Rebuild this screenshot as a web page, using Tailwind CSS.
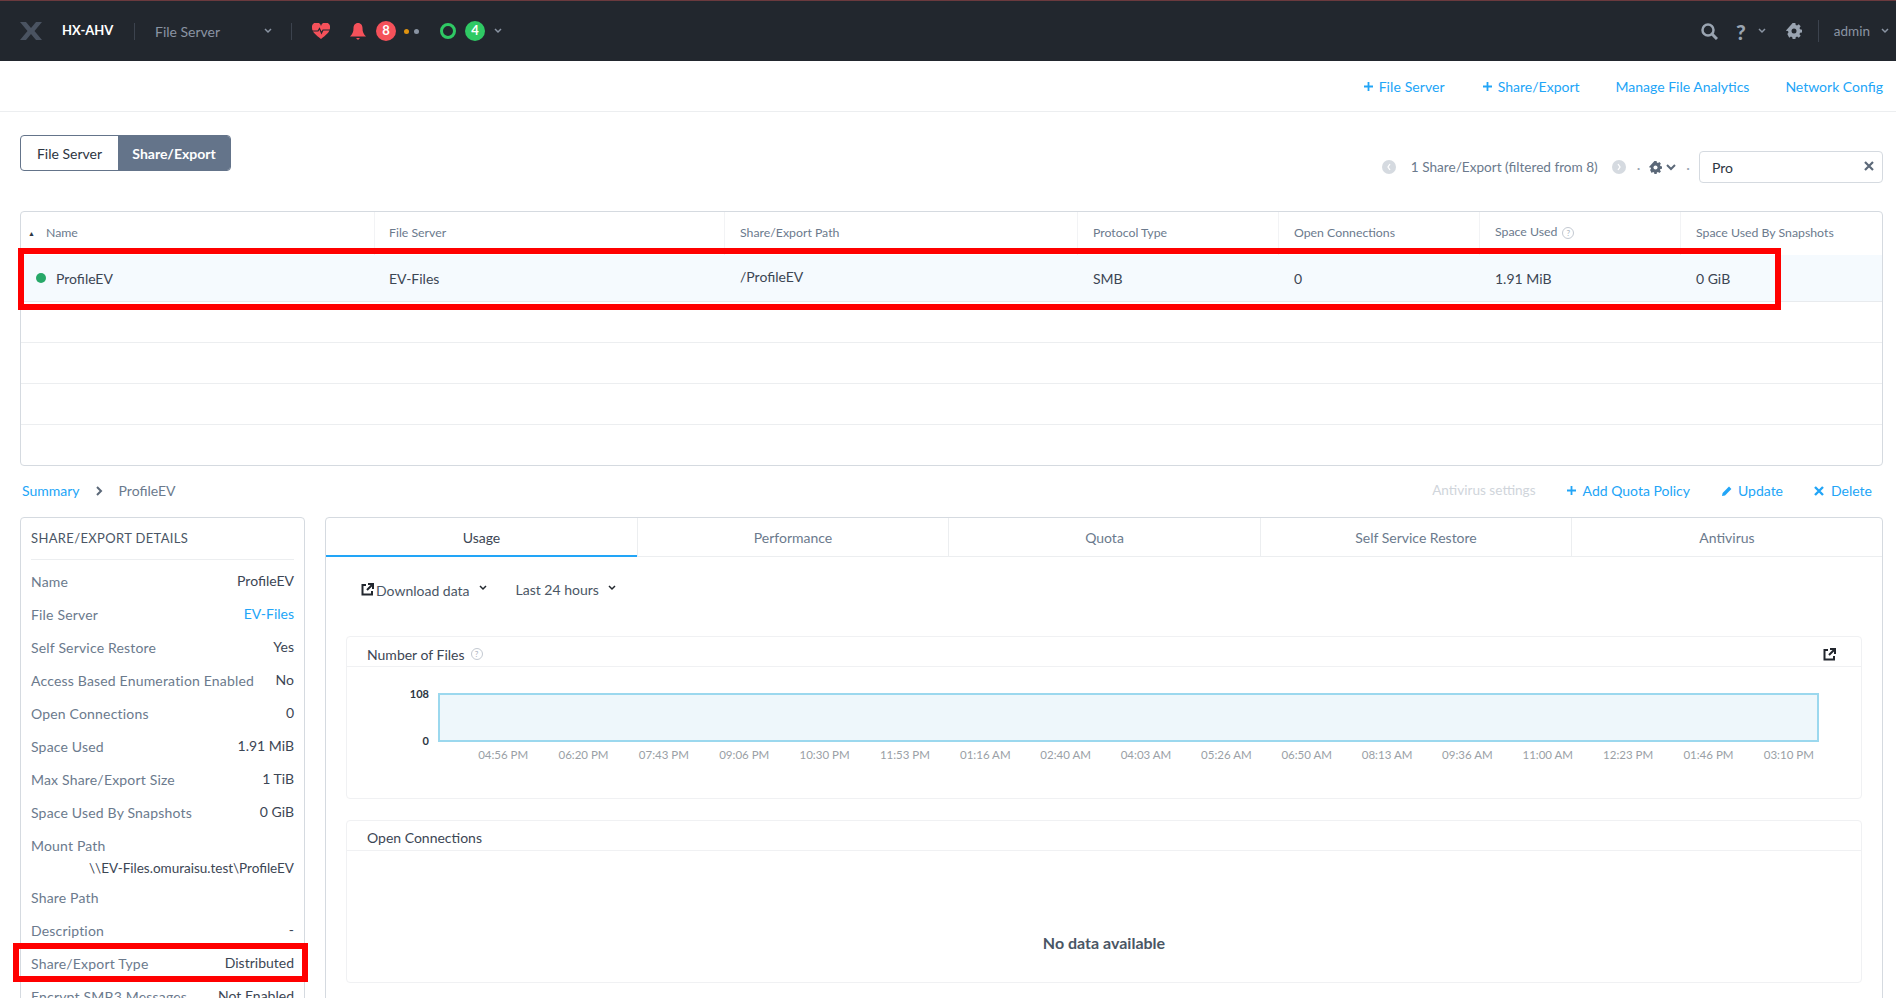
<!DOCTYPE html>
<html lang="en">

<head>
    <meta charset="UTF-8">
    <title>HX-AHV File Server</title>
    <script src="https://cdn.jsdelivr.net/npm/@tailwindcss/browser@4"></script>
</head>

<body class="relative h-[998px] overflow-hidden bg-white font-['Lato','Liberation_Sans',sans-serif] text-[14px] text-[#4a5665]">

    <!-- top nav -->
    <header class="h-[61px] bg-[#22272e] border-t border-[#6b3a3e] flex items-center text-[#8a94a3]">
        <svg class="ml-[20px] w-[22px] h-[18px]" viewBox="0 0 22 18"><path d="M0 0h6l5 6 5-6h6l-7.500 9L22 18h-6l-5-6-5 6H0l7.500-9z" fill="#4a5361"/></svg>
        <span class="ml-[20px] w-[52px] text-[13px] font-bold text-white">HX-AHV</span>
        <div class="ml-[20px] w-px h-[17px] bg-[#3c434e]"></div>
        <span class="ml-[20px] w-[109px]">File Server</span>
        <svg class="w-[8px] h-[6px]" viewBox="0 0 8 6"><path d="M1 1l3 3 3-3" fill="none" stroke="#8a94a3" stroke-width="1.500"/></svg>
        <div class="ml-[19px] w-px h-[17px] bg-[#3c434e]"></div>
        <svg class="ml-[20px] w-[18px] h-[16px]" viewBox="0 0 18 16"><path d="M9 16C4 12 0 9 0 5a4.500 4.500 0 0 1 9-2 4.500 4.500 0 0 1 9 2c0 4-4 7-9 11z" fill="#f5515a"/><path d="M0 8h6l1.500-2.500L9.500 10l1.500-3h7" fill="none" stroke="#22272e" stroke-width="1.200"/></svg>
        <svg class="ml-[20px] w-[16px] h-[17px]" viewBox="0 0 16 17"><path d="M8 0c3 0 4.500 2.500 4.500 5 0 4 1 6 3.500 8.500H0C2.500 11 3.500 9 3.500 5 3.500 2.500 5 0 8 0zM6 15h4l-2 2z" fill="#f5515a"/></svg>
        <span class="ml-[10px] w-[20px] h-[20px] rounded-full bg-[#f5515a] text-[13px] text-white font-bold flex items-center justify-center">8</span>
        <span class="ml-[8px] w-[5px] h-[5px] rounded-full bg-[#e0930f]"></span>
        <span class="ml-[5px] w-[5px] h-[5px] rounded-full bg-[#8a94a3]"></span>
        <span class="ml-[21px] w-[16px] h-[16px] rounded-full border-[3.500px] border-[#2fc964]"></span>
        <span class="ml-[9px] w-[20px] h-[20px] rounded-full bg-[#2fc964] text-[13px] text-white font-bold flex items-center justify-center">4</span>
        <svg class="ml-[9px] w-[8px] h-[6px]" viewBox="0 0 8 6"><path d="M1 1l3 3 3-3" fill="none" stroke="#8a94a3" stroke-width="1.500"/></svg>

        <div class="ml-auto flex items-center">
            <svg class="w-[17px] h-[17px]" viewBox="0 0 17 17"><circle cx="7" cy="7" r="5.500" fill="none" stroke="#9aa4b1" stroke-width="2.500"/><path d="M11 11l5 5" stroke="#9aa4b1" stroke-width="3"/></svg>
            <span class="ml-[18px] text-[21px] font-black leading-none text-[#9aa4b1]">?</span>
            <svg class="ml-[12px] w-[8px] h-[6px]" viewBox="0 0 8 6"><path d="M1 1l3 3 3-3" fill="none" stroke="#8a94a3" stroke-width="1.500"/></svg>
            <svg class="ml-[20px] w-[16px] h-[16px]" viewBox="0 0 16 16"><path d="M6.500 0h3l.4 2.200 1.500.6L13.300 1.500l2.100 2.100-1.300 1.900.6 1.500 2.300.5v3l-2.300.4-.6 1.500 1.300 1.900-2.100 2.100-1.900-1.300-1.500.6-.4 2.300h-3l-.4-2.300-1.500-.6-1.900 1.300L.6 12.300l1.300-1.900-.6-1.500L-1 8.500z" fill="#9aa4b1" transform="translate(.8 0) scale(.9)"/><circle cx="8" cy="8" r="2.500" fill="#22272e"/></svg>
            <div class="ml-[16px] w-px h-[22px] bg-[#3c434e]"></div>
            <span class="ml-[15px] text-[13.500px]">admin</span>
            <svg class="ml-[11px] mr-[7px] w-[8px] h-[6px]" viewBox="0 0 8 6"><path d="M1 1l3 3 3-3" fill="none" stroke="#8a94a3" stroke-width="1.500"/></svg>
        </div>
    </header>

    <!-- action bar -->
    <div class="h-[51px] border-b border-[#eceef0] flex items-center justify-end pr-[13px] text-[#22a5f7]">
        <svg class="mr-[6px] w-[9px] h-[9px]" viewBox="0 0 9 9"><path d="M4.500 0v9M0 4.500h9" stroke="#22a5f7" stroke-width="1.800"/></svg><span class="tracking-[0.1px]">File Server</span>
        <svg class="ml-[38px] mr-[6px] w-[9px] h-[9px]" viewBox="0 0 9 9"><path d="M4.500 0v9M0 4.500h9" stroke="#22a5f7" stroke-width="1.800"/></svg><span>Share/Export</span>
        <span class="ml-[36px]">Manage File Analytics</span>
        <span class="ml-[36px]">Network Config</span>
    </div>

    <!-- toggle + filter -->
    <div class="h-[99px] flex pr-[13px] pl-[20px]">
        <div class="mt-[23px] h-[36px] flex rounded border border-[#64748a] overflow-hidden">
            <span class="w-[97px] pt-[1px] flex items-center justify-center text-[#2d3642]">File Server</span>
            <span class="w-[112px] pt-[1px] flex items-center justify-center bg-[#64748a] text-white font-bold">Share/Export</span>
        </div>
        <div class="ml-auto mt-[39px] h-[32px] flex items-center text-[#6b7a8d]">
            <span class="w-[14px] h-[14px] rounded-full bg-[#d5dae0] flex items-center justify-center"><svg class="w-[6px] h-[8px]" viewBox="0 0 6 8"><path d="M4 1L2 4l2 3" fill="none" stroke="#fff" stroke-width="1.300"/></svg></span>
            <span class="ml-[15px] text-[13.600px]">1 Share/Export (filtered from 8)</span>
            <span class="ml-[14px] w-[14px] h-[14px] rounded-full bg-[#d5dae0] flex items-center justify-center"><svg class="w-[6px] h-[8px]" viewBox="0 0 6 8"><path d="M2 1l2 3-2 3" fill="none" stroke="#fff" stroke-width="1.300"/></svg></span>
            <span class="ml-[11px] text-[#9aa4b1]">·</span>
            <svg class="ml-[9px] w-[13px] h-[13px]" viewBox="0 0 16 16"><path d="M6.500 0h3l.4 2.200 1.500.6 1.900-1.300 2.100 2.100-1.300 1.900.6 1.500 2.300.5v3l-2.300.4-.6 1.500 1.300 1.900-2.100 2.100-1.900-1.300-1.500.6-.4 2.300h-3l-.4-2.300-1.500-.6-1.900 1.300L.6 12.300l1.300-1.900-.6-1.500L-1 8.500z" fill="#5b6878" transform="translate(.8 0) scale(.9)"/><circle cx="8" cy="8" r="2.500" fill="#fff"/></svg>
            <svg class="ml-[4px] w-[10px] h-[7px]" viewBox="0 0 10 7"><path d="M1 1l4 4 4-4" fill="none" stroke="#5b6878" stroke-width="2"/></svg>
            <span class="ml-[10px] text-[#9aa4b1]">·</span>
            <div class="ml-[9px] w-[184px] h-[32px] rounded border border-[#d5dae0] flex items-center justify-between pl-[12px] pr-[8px] text-[#2d3642]">
                <span class="pt-[1px]">Pro</span>
                <svg class="w-[10px] h-[10px] mb-[3px]" viewBox="0 0 10 10"><path d="M1 1l8 8M9 1l-8 8" stroke="#5b6878" stroke-width="2.200"/></svg>
            </div>
        </div>
    </div>

    <!-- table -->
    <div class="mr-[13px] ml-[20px] h-[255px] rounded border border-[#d5dae0] overflow-hidden">
        <div class="h-[43px] grid grid-cols-[354px_350px_353px_201px_201px_201px_1fr] text-[12.300px] text-[#6b7a8d]">
            <div class="border-r border-[#f2f3f5] pl-[7px] flex items-center"><span class="text-[7px] mr-[11px] text-[#2d3642]">▲</span>Name</div>
            <div class="border-r border-[#f2f3f5] pl-[14px] flex items-center">File Server</div>
            <div class="border-r border-[#f2f3f5] pl-[15px] flex items-center">Share/Export Path</div>
            <div class="border-r border-[#f2f3f5] pl-[15px] flex items-center">Protocol Type</div>
            <div class="border-r border-[#f2f3f5] pl-[15px] flex items-center">Open Connections</div>
            <div class="border-r border-[#f2f3f5] pl-[15px] pb-[2px] flex items-center">Space Used
                <span class="ml-[5px] w-[12px] h-[12px] rounded-full border border-[#c3c9d1] text-[8px] text-[#a9b1bb] flex items-center justify-center">?</span>
            </div>
            <div class="pl-[15px] flex items-center">Space Used By Snapshots</div>
        </div>
        <div class="h-[47px] bg-[#f5fafe] border-b border-[#e8ebee] grid grid-cols-[354px_350px_353px_201px_201px_201px_1fr] items-center text-[#3c4654]">
            <div class="pl-[16px] flex items-center"><span class="w-[10px] h-[10px] rounded-full bg-[#27a868] mr-[6px] -ml-[1px]"></span><span class="ml-[4px]">ProfileEV</span></div>
            <div class="pl-[14px]">EV-Files</div>
            <div class="pl-[15px] -mt-[4px]">/ProfileEV</div>
            <div class="pl-[15px]">SMB</div>
            <div class="pl-[15px]">0</div>
            <div class="pl-[15px]">1.91 MiB</div>
            <div class="pl-[15px]">0 GiB</div>
        </div>
        <div class="h-[41px] border-b border-[#eceef0]"></div>
        <div class="h-[41px] border-b border-[#eceef0]"></div>
        <div class="h-[41px] border-b border-[#eceef0]"></div>
    </div>

    <!-- breadcrumb + actions -->
    <div class="h-[51px] flex items-center pl-[22px] pr-[24px] pb-[2px]">
        <span class="text-[#22a5f7]">Summary</span>
        <svg class="ml-[15px] w-[8px] h-[10px]" viewBox="0 0 8 10"><path d="M2 1l4 4-4 4" fill="none" stroke="#5b6878" stroke-width="2"/></svg>
        <span class="ml-[16px] text-[#6b7a8d]">ProfileEV</span>
        <div class="ml-auto flex items-center text-[#22a5f7]">
            <span class="text-[13.600px] text-[#d0d5db]">Antivirus settings</span>
            <svg class="ml-[31px] mr-[7px] w-[9px] h-[9px]" viewBox="0 0 9 9"><path d="M4.500 0v9M0 4.500h9" stroke="#22a5f7" stroke-width="1.800"/></svg><span>Add Quota Policy</span>
            <svg class="ml-[32px] mr-[6px] w-[10px] h-[10px]" viewBox="0 0 10 10"><path d="M0 10l.6-3L7 .6 9.400 3 3 9.400z" fill="#22a5f7"/></svg><span>Update</span>
            <svg class="ml-[31px] mr-[7px] w-[10px] h-[10px]" viewBox="0 0 10 10"><path d="M1 1l8 8M9 1l-8 8" stroke="#22a5f7" stroke-width="2.400"/></svg><span>Delete</span>
        </div>
    </div>

    <!-- detail area -->
    <div class="flex pl-[20px] pr-[13px] gap-[20px]">
        <aside class="w-[285px] h-[500px] shrink-0 rounded-t border border-[#d5dae0] px-[10px]">
            <div class="h-[42px] pt-[1px] border-b border-[#eceef0] flex items-center text-[13px] text-[#4a5665] tracking-[0.35px]">SHARE/EXPORT DETAILS</div>
            <dl class="pt-[5px] text-[#6b7a8d] tracking-[0.18px] [&_dd]:tracking-normal">
                <div class="h-[33px] flex items-center justify-between"><dt>Name</dt><dd class="text-[#3c4654] -mt-[2px]">ProfileEV</dd></div>
                <div class="h-[33px] flex items-center justify-between"><dt>File Server</dt><dd class="text-[#22a5f7] -mt-[2px]">EV-Files</dd></div>
                <div class="h-[33px] flex items-center justify-between"><dt>Self Service Restore</dt><dd class="text-[#3c4654] -mt-[2px]">Yes</dd></div>
                <div class="h-[33px] flex items-center justify-between"><dt>Access Based Enumeration Enabled</dt><dd class="text-[#3c4654] -mt-[2px]">No</dd></div>
                <div class="h-[33px] flex items-center justify-between"><dt>Open Connections</dt><dd class="text-[#3c4654] -mt-[2px]">0</dd></div>
                <div class="h-[33px] flex items-center justify-between"><dt>Space Used</dt><dd class="text-[#3c4654] -mt-[2px]">1.91 MiB</dd></div>
                <div class="h-[33px] flex items-center justify-between"><dt>Max Share/Export Size</dt><dd class="text-[#3c4654] -mt-[2px]">1 TiB</dd></div>
                <div class="h-[33px] flex items-center justify-between"><dt>Space Used By Snapshots</dt><dd class="text-[#3c4654] -mt-[2px]">0 GiB</dd></div>
                <div class="h-[33px] flex items-center"><dt>Mount Path</dt></div>
                <div class="h-[23px] -mt-[4px] text-right text-[13.500px] text-[#3c4654]"><dd>\\EV-Files.omuraisu.test\ProfileEV</dd></div>
                <div class="h-[33px] flex items-center"><dt>Share Path</dt></div>
                <div class="h-[33px] flex items-center justify-between"><dt>Description</dt><dd class="text-[#3c4654] -mt-[2px]">-</dd></div>
                <div class="h-[33px] flex items-center justify-between"><dt>Share/Export Type</dt><dd class="text-[#3c4654] -mt-[2px]">Distributed</dd></div>
                <div class="h-[33px] flex items-center justify-between"><dt>Encrypt SMB3 Messages</dt><dd class="text-[#3c4654] -mt-[2px]">Not Enabled</dd></div>
            </dl>
        </aside>

        <main class="flex-1 h-[500px] rounded-t border border-[#d5dae0]">
            <div class="h-[39px] grid grid-cols-[311px_311px_312px_311px_1fr] text-[#6b7a8d]">
                <div class="pt-[1px] flex items-center justify-center text-[#3c4654] border-b-2 border-[#22a5f7]">Usage</div>
                <div class="pt-[1px] flex items-center justify-center border-b border-l border-[#eceef0]">Performance</div>
                <div class="pt-[1px] flex items-center justify-center border-b border-l border-[#eceef0]">Quota</div>
                <div class="pt-[1px] flex items-center justify-center border-b border-l border-[#eceef0]">Self Service Restore</div>
                <div class="pt-[1px] flex items-center justify-center border-b border-l border-[#eceef0]">Antivirus</div>
            </div>

            <div class="h-[79px] pl-[35px] pt-[21px] flex items-start text-[#4a5665]">
                <svg class="w-[13px] h-[13px] mt-[5px]" viewBox="0 0 13 13"><path d="M5 2H1.500v9.500H11V8" fill="none" stroke="#22272e" stroke-width="2"/><path d="M7 1h5v5M11.500 1.500L6 7" fill="none" stroke="#22272e" stroke-width="2"/></svg>
                <span class="ml-[2px] pt-[2px]">Download data</span>
                <svg class="ml-[9px] mt-[7px] w-[8px] h-[6px]" viewBox="0 0 8 6"><path d="M1 1l3 3 3-3" fill="none" stroke="#22272e" stroke-width="1.500"/></svg>
                <span class="ml-[29px] pt-[1px]">Last 24 hours</span>
                <svg class="ml-[9px] mt-[7px] w-[8px] h-[6px]" viewBox="0 0 8 6"><path d="M1 1l3 3 3-3" fill="none" stroke="#22272e" stroke-width="1.500"/></svg>
            </div>

            <!-- number of files chart -->
            <section class="mx-[20px] h-[163px] rounded border border-[#f0f1f3]">
                <div class="h-[30px] border-b border-[#f0f1f3] flex items-center pt-[5px] pl-[20px] pr-[25px] text-[#3c4654]">
                    <span>Number of Files</span>
                    <span class="ml-[6px] w-[12px] h-[12px] rounded-full border border-[#c3c9d1] text-[8px] text-[#a9b1bb] flex items-center justify-center">?</span>
                    <svg class="ml-auto w-[13px] h-[13px]" viewBox="0 0 13 13"><path d="M5 2H1.500v9.500H11V8" fill="none" stroke="#22272e" stroke-width="2"/><path d="M7 1h5v5M11.500 1.500L6 7" fill="none" stroke="#22272e" stroke-width="2"/></svg>
                </div>
                <div class="flex pt-[26px]">
                    <div class="w-[82px] h-[58px] flex flex-col justify-between text-right text-[11px] font-bold text-[#2d3642] leading-none -mt-[5px]">
                        <span>108</span>
                        <span>0</span>
                    </div>
                    <div class="ml-[9px] w-[381px] grow mr-[42px] h-[49px] bg-[#eef7fb] border-2 border-[#9bd8ee]"></div>
                </div>
                <div class="ml-[116px] w-[1366px] grid grid-cols-[repeat(17,1fr)] text-center text-[11.500px] text-[#9a9fa6]">
                    <span>04:56 PM</span><span>06:20 PM</span><span>07:43 PM</span><span>09:06 PM</span><span>10:30 PM</span><span>11:53 PM</span><span>01:16 AM</span><span>02:40 AM</span><span>04:03 AM</span><span>05:26 AM</span><span>06:50 AM</span><span>08:13 AM</span><span>09:36 AM</span><span>11:00 AM</span><span>12:23 PM</span><span>01:46 PM</span><span>03:10 PM</span>
                </div>
            </section>

            <!-- open connections -->
            <section class="mx-[20px] mt-[21px] h-[163px] rounded border border-[#f0f1f3]">
                <div class="h-[30px] border-b border-[#f0f1f3] flex items-center pt-[4px] pl-[20px] text-[#3c4654]">Open Connections</div>
                <div class="h-[131px] flex items-center justify-center pt-[52px] text-[16px] font-bold text-[#4a5665]">No data available</div>
            </section>
        </main>
    </div>

    <!-- annotation boxes -->
    <div class="absolute left-[18px] top-[248px] w-[1763px] h-[62px] border-[6px] border-[#ff0000]"></div>
    <div class="absolute left-[13px] top-[943px] w-[295px] h-[39px] border-[6px] border-[#ff0000]"></div>
</body>

</html>
